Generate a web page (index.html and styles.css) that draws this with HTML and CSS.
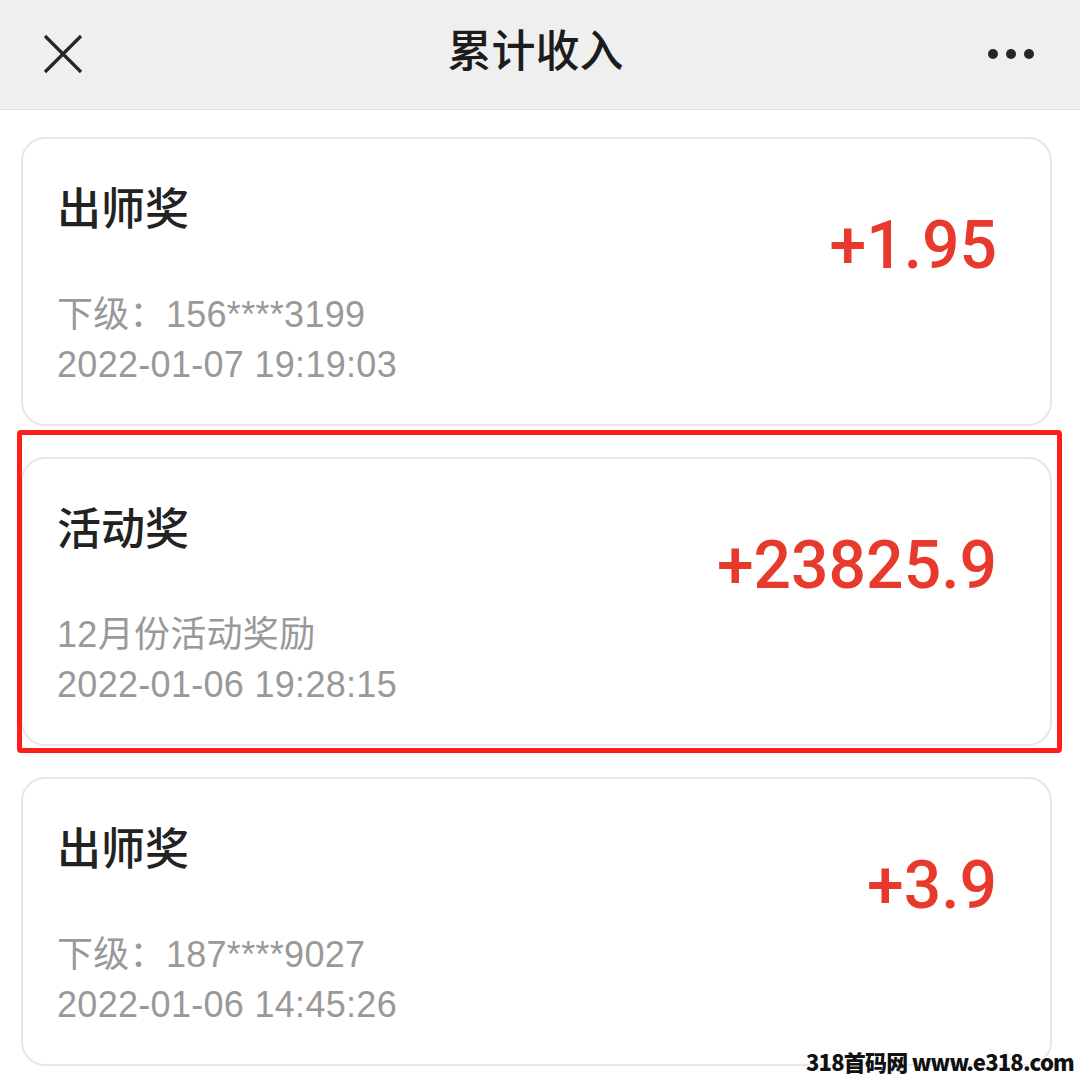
FILE: index.html
```html
<!DOCTYPE html>
<html lang="zh-CN">
<head>
	<meta charset="UTF-8">
	<title>累计收入</title>
	<link rel="stylesheet" href="styles.css">
</head>
<body>
	<div class="nav">
		<span class="nav-close">
			<svg width="40" height="40" viewBox="0 0 40 40">
				<path d="M2 2L38 38M38 2L2 38" stroke="#262626" stroke-width="3.2" fill="none"/>
			</svg>
		</span>
		<h1 class="nav-title">累计收入</h1>
		<span class="nav-more">
			<i></i><i></i><i></i>
		</span>
	</div>

	<div class="list">
		<div class="card">
			<div class="info">
				<h2 class="title">出师奖</h2>
				<p class="sub">下级：156****3199</p>
				<p class="sub">2022-01-07 19:19:03</p>
			</div>
			<div class="amount">+1.95</div>
		</div>

		<div class="card marked">
			<div class="info">
				<h2 class="title">活动奖</h2>
				<p class="sub">12月份活动奖励</p>
				<p class="sub">2022-01-06 19:28:15</p>
			</div>
			<div class="amount">+23825.9</div>
			<span class="mark"></span>
		</div>

		<div class="card">
			<div class="info">
				<h2 class="title">出师奖</h2>
				<p class="sub">下级：187****9027</p>
				<p class="sub">2022-01-06 14:45:26</p>
			</div>
			<div class="amount">+3.9</div>
		</div>
	</div>

	<div class="watermark">318首码网 www.e318.com</div>
</body>
</html>
```

FILE: styles.css
```css
*{
	margin: 0;
	padding: 0;
	box-sizing: border-box;
}
html,body{
	height: 1079px;
	overflow: hidden;
}
body{
	position: relative;
	background: #fff;
	font-family: "Liberation Sans", "Noto Sans CJK SC", sans-serif;
	color: #222;
}

/* 顶部导航 */
.nav{
	height: 110px;
	background: #efefef;
	border-bottom: 1px solid #e2e2e2;
	display: flex;
	align-items: center;
	justify-content: space-between;
	padding: 0 46px 14px 43px;
}
.nav-close{
	display: flex;
	width: 40px;
	height: 40px;
	margin-top: 12px;
}
.nav-title{
	font-family: "Noto Sans CJK SC", sans-serif;
	font-size: 44px;
	font-weight: 500;
	color: #1c1c1c;
}
.nav-more{
	display: flex;
	gap: 8px;
	width: 46px;
	margin-top: 12px;
}
.nav-more i{
	display: block;
	width: 10px;
	height: 10px;
	border-radius: 50%;
	background: #262626;
}

/* 列表 */
.list{
	display: flex;
	flex-direction: column;
	gap: 31px;
	padding: 27px 28px 0 21px;
}
.card{
	position: relative;
	height: 289px;
	border: 2px solid #e7e7e7;
	border-radius: 24px;
	padding: 37px 53px 0 34px;
	display: flex;
	justify-content: space-between;
	align-items: flex-start;
}
.title{
	font-family: "Noto Sans CJK SC", sans-serif;
	font-size: 44px;
	font-weight: 500;
	line-height: 60px;
	color: #222;
	margin-bottom: 54px;
}
.sub{
	font-size: 36px;
	line-height: 50px;
	letter-spacing: 0.3px;
	color: #999;
}
.amount{
	font-family: Roboto, "Liberation Sans", sans-serif;
	font-size: 66px;
	font-weight: 500;
	line-height: 66px;
	color: #e8392d;
	margin-top: 37px;
}

/* 红色标注框 */
.mark{
	position: absolute;
	left: -6px;
	top: -29px;
	right: -12px;
	bottom: -9px;
	border: 5px solid #fe1d18;
	border-radius: 4px;
	pointer-events: none;
}

.watermark{
	position: absolute;
	right: 6px;
	bottom: 4px;
	font-family: "Noto Sans CJK SC", sans-serif;
	font-size: 22px;
	font-weight: 900;
	line-height: 28px;
	letter-spacing: -0.8px;
	color: #111;
	text-shadow: 0 0 3px #fff, 0 0 3px #fff;
}
```
